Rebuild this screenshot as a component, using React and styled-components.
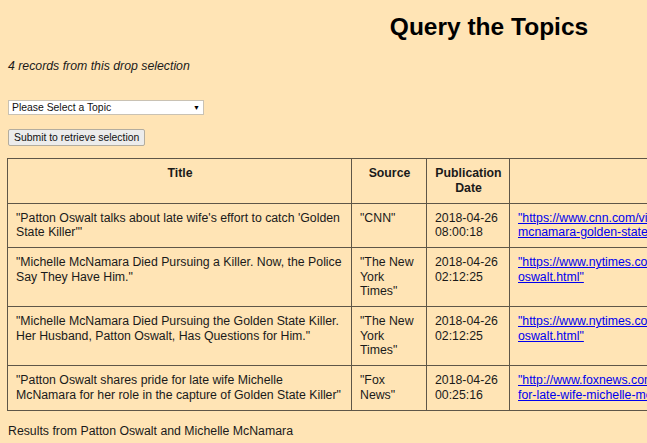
import styled, { createGlobalStyle } from 'styled-components';

const GlobalStyle = createGlobalStyle`
  html, body {
    margin: 0;
    padding: 0;
    overflow: hidden;
    background: #ffe4b5;
  }
  body {
    font-family: 'Liberation Sans', Arial, sans-serif;
    color: #1a1a1a;
  }
`;

const records = [
  {
    title: `"Patton Oswalt talks about late wife's effort to catch 'Golden State Killer'"`,
    source: '"CNN"',
    date: '2018-04-26',
    time: '08:00:18',
    href: 'https://www.cnn.com/videos/entertainment/2018/04/26/patton-oswalt-michelle-mcnamara-golden-state-killer-newday.cnn',
    lines: [
      '"https://www.cnn.com/videos/entertainment/2018/04/26/patton-oswalt-michelle-',
      'mcnamara-golden-state-killer-newday.cnn"',
    ],
  },
  {
    title: '"Michelle McNamara Died Pursuing a Killer. Now, the Police Say They Have Him."',
    source: '"The New York Times"',
    date: '2018-04-26',
    time: '02:12:25',
    href: 'https://www.nytimes.com/2018/04/26/us/michelle-mcnamara-golden-state-killer-patton-oswalt.html',
    lines: [
      '"https://www.nytimes.com/2018/04/26/us/michelle-mcnamara-golden-state-killer-patton-',
      'oswalt.html"',
    ],
  },
  {
    title: '"Michelle McNamara Died Pursuing the Golden State Killer. Her Husband, Patton Oswalt, Has Questions for Him."',
    source: '"The New York Times"',
    date: '2018-04-26',
    time: '02:12:25',
    href: 'https://www.nytimes.com/2018/04/26/arts/michelle-mcnamara-golden-state-killer-patton-oswalt.html',
    lines: [
      '"https://www.nytimes.com/2018/04/26/arts/michelle-mcnamara-golden-state-killer-patton-',
      'oswalt.html"',
    ],
  },
  {
    title: '"Patton Oswalt shares pride for late wife Michelle McNamara for her role in the capture of Golden State Killer"',
    source: '"Fox News"',
    date: '2018-04-26',
    time: '00:25:16',
    href: 'http://www.foxnews.com/entertainment/2018/04/26/patton-oswalt-shares-pride-for-late-wife-michelle-mcnamara.html',
    lines: [
      '"http://www.foxnews.com/entertainment/2018/04/26/patton-oswalt-shares-pride-',
      'for-late-wife-michelle-mcnamara.html"',
    ],
  },
];

const App = () => {
  return (
    <Page>
      <GlobalStyle />
      <Heading>Query the Topics</Heading>
      <Count>4 records from this drop selection</Count>
      <SelectWrap>
        <TopicSelect defaultValue="">
          <option value="">Please Select a Topic</option>
        </TopicSelect>
        <Caret>▼</Caret>
      </SelectWrap>
      <SubmitButton type="button">Submit to retrieve selection</SubmitButton>
      <Table>
        <colgroup>
          <col style={{ width: 344 }} />
          <col style={{ width: 75 }} />
          <col style={{ width: 83 }} />
          <col style={{ width: 462 }} />
        </colgroup>
        <thead>
          <tr>
            <Th>Title</Th>
            <Th>Source</Th>
            <Th>Publication Date</Th>
            <Th></Th>
          </tr>
        </thead>
        <tbody>
          {records.map((r, i) => (
            <tr key={i}>
              <Td>{r.title}</Td>
              <Td>{r.source}</Td>
              <Td>
                {r.date}
                <br />
                {r.time}
              </Td>
              <Td>
                <Link href={r.href}>
                  {r.lines.map((l, j) => (
                    <LinkLine key={j}>{l}</LinkLine>
                  ))}
                </Link>
              </Td>
            </tr>
          ))}
        </tbody>
      </Table>
      <Footer>Results from Patton Oswalt and Michelle McNamara</Footer>
    </Page>
  );
};

const Page = styled.div`
  width: 964px;
  padding: 0 8px 8px 7px;
  font-size: 12.3px;
  line-height: 14.3px;
`;

const Heading = styled.h1`
  margin: 13px 0 0;
  font-size: 24.5px;
  line-height: 28px;
  font-weight: bold;
  color: #000;
  text-align: center;
`;

const Count = styled.p`
  margin: 18px 0 0 1px;
  font-style: italic;
`;

const SelectWrap = styled.div`
  position: relative;
  width: 196px;
  margin: 27px 0 0 1px;
`;

const TopicSelect = styled.select`
  appearance: none;
  display: block;
  width: 196px;
  height: 15px;
  padding: 0 0 0 3px;
  border: 1px solid #c9c2b4;
  border-radius: 0;
  background: #fff;
  color: #111;
  font-family: 'Liberation Sans', Arial, sans-serif;
  font-size: 10.4px;
  line-height: 13px;
`;

const Caret = styled.span`
  position: absolute;
  right: 4px;
  top: 3px;
  font-size: 7px;
  line-height: 9px;
  color: #000;
  pointer-events: none;
`;

const SubmitButton = styled.button`
  display: block;
  margin: 14px 0 0 1px;
  height: 17px;
  padding: 0 5px;
  border: 1px solid #b3ad9f;
  border-radius: 2px;
  background: #ececec;
  color: #111;
  font-family: 'Liberation Sans', Arial, sans-serif;
  font-size: 10.4px;
  line-height: 15px;
`;

const Table = styled.table`
  margin-top: 12px;
  width: 964px;
  table-layout: fixed;
  border-collapse: collapse;
`;

const Th = styled.th`
  border: 1px solid #5e5648;
  padding: 7px 7px 8px 8px;
  vertical-align: top;
  text-align: center;
  font-weight: bold;
`;

const Td = styled.td`
  border: 1px solid #5e5648;
  padding: 7px 6px 8px 8px;
  vertical-align: top;
  text-align: left;
`;

const Link = styled.a`
  color: #0000ee;
  text-decoration: underline;
`;

const LinkLine = styled.span`
  display: block;
  white-space: nowrap;
`;

const Footer = styled.p`
  margin: 13px 0 0 1px;
`;

export default App;
